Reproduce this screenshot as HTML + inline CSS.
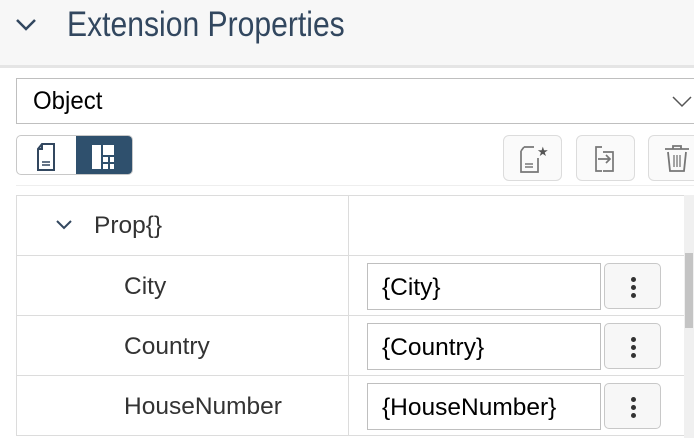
<!DOCTYPE html>
<html><head><meta charset="utf-8"><style>
*{box-sizing:border-box;margin:0;padding:0}
body{width:694px;height:438px;overflow:hidden;background:#fff;font-family:"Liberation Sans",sans-serif;position:relative}
.abs{position:absolute}
.hdr{left:0;top:0;width:694px;height:68px;background:#f7f7f7;border-bottom:3px solid #e5e5e5}
.title{left:67px;top:5px;font-size:35px;color:#32475f;transform:scaleX(0.86);transform-origin:left}
.sel{left:16px;top:78px;width:690px;height:46px;border:1px solid #bfbfbf;background:#fff}
.sel span{position:absolute;left:16px;top:8px;font-size:25px;color:#000;transform:scaleX(0.96);transform-origin:left}
.seg{left:16px;top:135px;width:117px;height:40px;border:1px solid #c8c8c8;border-radius:5px;overflow:hidden;background:#fff}
.seg .on{position:absolute;left:59px;top:0;width:58px;height:40px;background:#2f506d}
.tb{top:135px;width:59px;height:46px;border:1px solid #dcdcdc;border-radius:6px;background:#fafafa}
.tbl{left:16px;top:195px;width:668px;height:241px;border:1px solid #dcdcdc;border-right:none}
.row{position:absolute;left:0;width:668px;height:60px;border-top:1px solid #dcdcdc}
.lbl{position:absolute;top:17px;font-size:24.5px;color:#333}
.vline{position:absolute;left:331px;top:0;width:1px;height:240px;background:#dcdcdc}
.inp{position:absolute;left:350px;top:7px;width:234px;height:47px;border:1px solid #bfbfbf;background:#fff}
.inp span{position:absolute;left:14px;top:10px;font-size:24.5px;color:#000}
.mb{position:absolute;left:587px;top:7px;width:57px;height:46px;border:1px solid #c8c8c8;border-radius:5px;background:#f7f7f7}
.dot{position:absolute;left:26px;width:5px;height:5px;border-radius:50%;background:#333}
.sb{left:684px;top:195px;width:10px;height:243px;background:#f0f0f0}
</style></head><body>
<div class="abs hdr"></div>
<svg class="abs" style="left:14px;top:16px" width="24" height="18"><polyline points="3,4 12,13 21,4" fill="none" stroke="#32475f" stroke-width="2.5"/></svg>
<div class="abs title">Extension Properties</div>
<div class="abs sel"><span>Object</span>
<svg style="position:absolute;left:654px;top:16px" width="22" height="14"><polyline points="2,2 11,11 20,2" fill="none" stroke="#555" stroke-width="1.5"/></svg></div>
<div class="abs seg"><div class="on"></div>
<svg style="position:absolute;left:17px;top:6px" width="24" height="30"><path d="M8 2H20V28H4V7Z M8 2V7H4" fill="none" stroke="#32475f" stroke-width="2"/><path d="M8 20H16M8 23H16" stroke="#32475f" stroke-width="1.5"/></svg>
<svg style="position:absolute;left:72px;top:7px" width="30" height="28"><rect x="3" y="2" width="9" height="24" fill="#fff"/><rect x="14" y="2" width="11" height="10" fill="#fff"/><rect x="14" y="14" width="5" height="5" fill="#fff"/><rect x="21" y="14" width="4" height="5" fill="#fff"/><rect x="14" y="21" width="5" height="5" fill="#fff"/><rect x="21" y="21" width="4" height="5" fill="#fff"/></svg>
</div>
<div class="abs tb" style="left:503px"><svg style="position:absolute;left:12px;top:8px" width="34" height="30"><path d="M8 3H18 M5 7V28H22V14 M5 7L8 3" fill="none" stroke="#777" stroke-width="1.7"/><path d="M9 20H17M9 23H17" stroke="#777" stroke-width="1.5"/><text x="21" y="12" font-size="13" fill="#555" font-family="DejaVu Sans">★</text></svg></div>
<div class="abs tb" style="left:576px"><svg style="position:absolute;left:14px;top:8px" width="30" height="30"><path d="M11 3H5V27H11 M12 8H22V27H12" fill="none" stroke="#777" stroke-width="1.7"/><path d="M7 15H19 M15 11L19 15L15 19" fill="none" stroke="#777" stroke-width="1.7"/></svg></div>
<div class="abs tb" style="left:648px"><svg style="position:absolute;left:13px;top:7px" width="32" height="30"><path d="M3 6H27 M11 6V3H19V6 M6 9L8 28H22L24 9" fill="none" stroke="#777" stroke-width="1.8"/><path d="M12 12V24M15 12V24M18 12V24" stroke="#777" stroke-width="1.3"/></svg></div>
<div class="abs" style="left:16px;top:185px;width:678px;height:1px;background:#eee"></div>
<div class="abs tbl">
<div class="vline"></div>
<div class="row" style="top:-1px;border-top:none">
<svg style="position:absolute;left:38px;top:24px" width="18" height="12"><polyline points="2,2 9,9 16,2" fill="none" stroke="#32475f" stroke-width="2"/></svg>
<div class="lbl" style="left:77px">Prop{}</div></div>
<div class="row" style="top:59px"><div class="lbl" style="left:107px">City</div><div class="inp"><span>{City}</span></div><div class="mb"><i class="dot" style="top:13px"></i><i class="dot" style="top:21px"></i><i class="dot" style="top:29px"></i></div></div>
<div class="row" style="top:119px"><div class="lbl" style="left:107px">Country</div><div class="inp"><span>{Country}</span></div><div class="mb"><i class="dot" style="top:13px"></i><i class="dot" style="top:21px"></i><i class="dot" style="top:29px"></i></div></div>
<div class="row" style="top:179px"><div class="lbl" style="left:107px">HouseNumber</div><div class="inp"><span>{HouseNumber}</span></div><div class="mb"><i class="dot" style="top:13px"></i><i class="dot" style="top:21px"></i><i class="dot" style="top:29px"></i></div></div>
</div>
<div class="abs sb"><div style="position:absolute;left:1px;top:58px;width:8px;height:75px;background:#c4c4c4"></div></div>
</body></html>
